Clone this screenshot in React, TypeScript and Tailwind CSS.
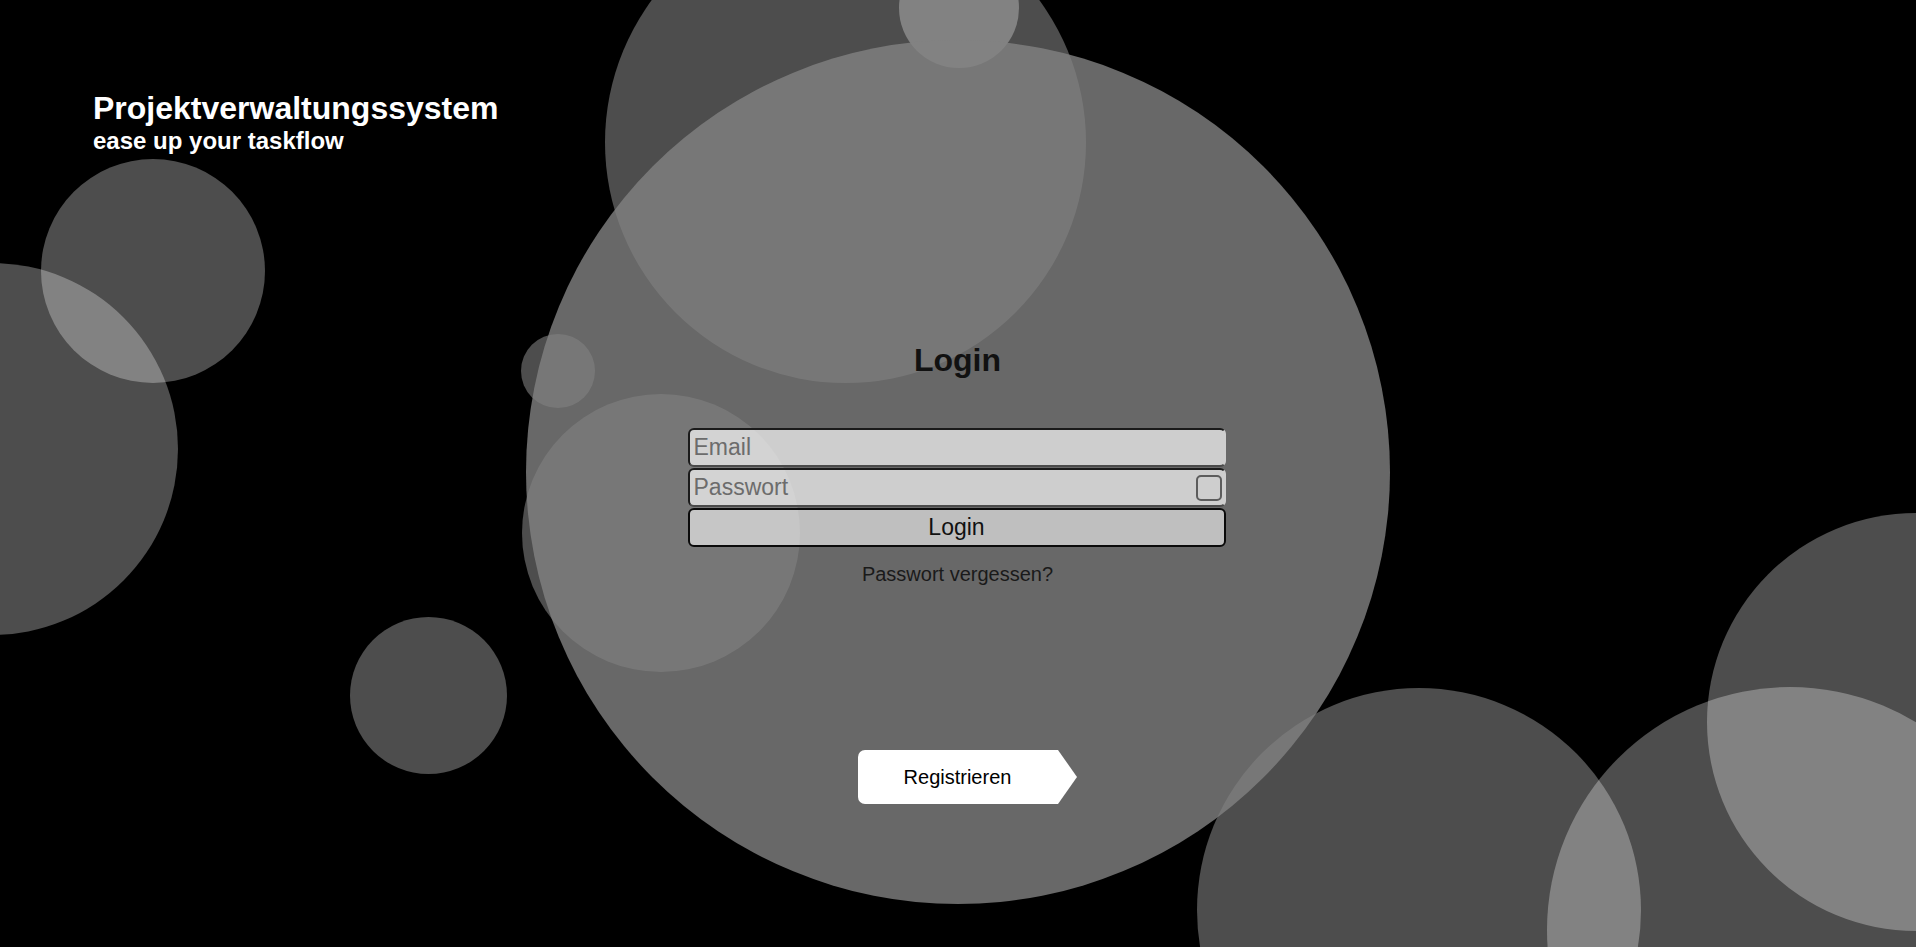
import React from "react";

type C = { x: number; y: number; r: number };

const circles: C[] = [
  { x: -8, y: 449, r: 186 },
  { x: 152.5, y: 271, r: 112 },
  { x: 845.5, y: 142, r: 240.5 },
  { x: 959, y: 8, r: 60 },
  { x: 558, y: 371, r: 37 },
  { x: 661, y: 533, r: 139 },
  { x: 428.5, y: 695, r: 78.5 },
  { x: 1419, y: 910, r: 222 },
  { x: 1916, y: 722, r: 209 },
  { x: 1790, y: 930, r: 243 },
];

export default function App() {
  return (
    <div
      className="relative h-screen w-full overflow-hidden bg-black"
      style={{ fontFamily: '"Liberation Sans", Arial, sans-serif' }}
    >
      {/* decorative bubbles */}
      <div className="pointer-events-none absolute inset-0">
        {circles.map((c, i) => (
          <div
            key={i}
            className="absolute rounded-full bg-white/30"
            style={{
              left: c.x - c.r,
              top: c.y - c.r,
              width: c.r * 2,
              height: c.r * 2,
            }}
          />
        ))}
      </div>

      {/* centered login bubble */}
      <div className="absolute inset-0 flex items-center justify-center">
        <div className="mb-[3px] mr-[1px] flex h-[864px] w-[864px] shrink-0 flex-col items-center rounded-full bg-[rgba(130,130,130,0.8)] pt-[302px]">
          <h2 className="h-[37px] text-[32px] font-bold leading-[37px] text-[#111]">
            Login
          </h2>
          <form
            className="mr-[2px] mt-[49px] flex w-[538px] flex-col gap-[1px]"
            onSubmit={(e) => e.preventDefault()}
          >
            <input
              type="email"
              placeholder="Email"
              className="h-[39px] w-full rounded-[6px] border-2 border-t-[#1a1a1a] border-l-[#1a1a1a] border-b-[#4a4a4a] border-r-transparent bg-white/[0.68] px-[4px] text-[23px] text-[#111] outline-none placeholder:text-[#6c6c6c]"
            />
            <div className="relative flex h-[39px] w-full items-center rounded-[6px] border-2 border-t-[#1a1a1a] border-l-[#1a1a1a] border-b-[#4a4a4a] border-r-transparent bg-white/[0.68]">
              <input
                type="password"
                placeholder="Passwort"
                className="h-full flex-1 bg-transparent px-[4px] text-[23px] text-[#111] outline-none placeholder:text-[#6c6c6c]"
              />
              <span className="mr-[2px] h-[26px] w-[26px] shrink-0 rounded-[5px] border-2 border-[#5c5c5c]" />
            </div>
            <button
              type="submit"
              className="h-[39px] w-full rounded-[6px] border-2 border-[#0a0a0a] bg-white/[0.58] text-[23px] leading-none text-[#111]"
            >
              Login
            </button>
          </form>
          <a className="mt-[16px] text-[20px] leading-[23px] text-[#1a1a1a]">
            Passwort vergessen?
          </a>
          <div className="relative mt-[164px] flex h-[54px] w-[200px] items-center justify-center rounded-l-[7px] bg-white">
            <span className="text-[20px] text-black">Registrieren</span>
            <svg
              className="absolute left-full top-0"
              width="19"
              height="54"
              viewBox="0 0 19 54"
            >
              <polygon points="0,0 19,27 0,54" fill="#ffffff" />
            </svg>
          </div>
        </div>
      </div>

      {/* header */}
      <header className="relative pl-[93px] pt-[90px] text-white">
        <h1 className="text-[32px] font-bold leading-[36.8px]">
          Projektverwaltungssystem
        </h1>
        <p className="text-[24px] font-bold leading-[27.6px]">
          ease up your taskflow
        </p>
      </header>
    </div>
  );
}
